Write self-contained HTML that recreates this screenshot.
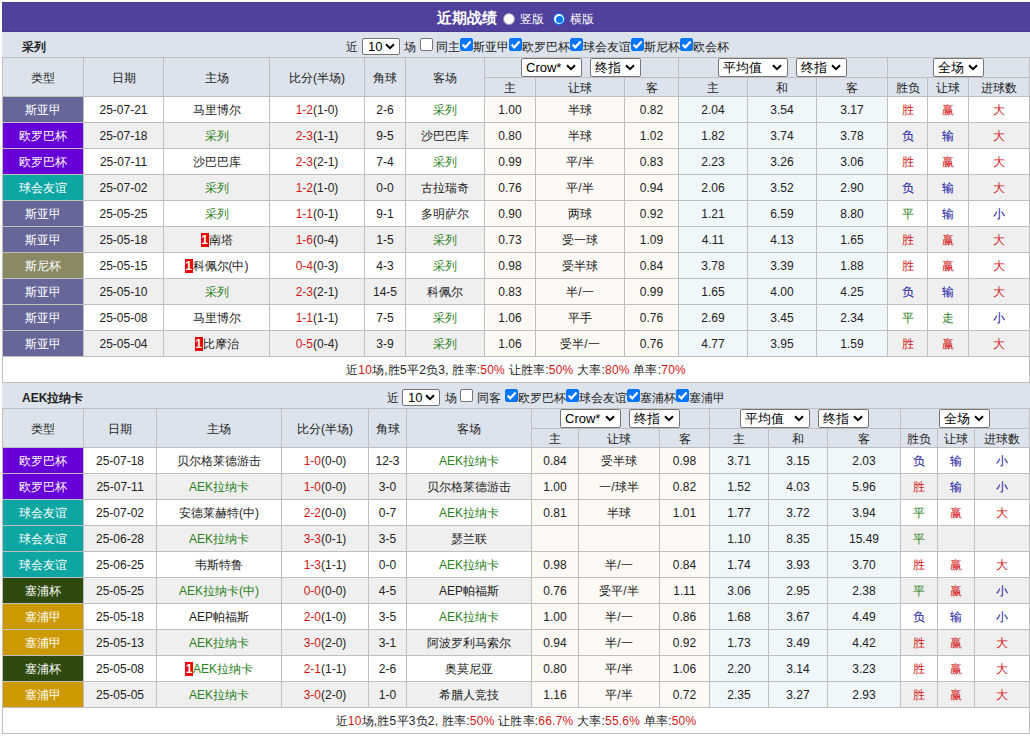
<!DOCTYPE html><html><head><meta charset="utf-8"><style>
html,body{margin:0;padding:0;background:#fff;width:1030px;height:736px;overflow:hidden;position:relative}
body{font-family:"Liberation Sans",sans-serif;font-size:12px;color:#222}
div{position:absolute;box-sizing:border-box;white-space:nowrap}
.t{white-space:nowrap}
.sel{background:#fff;border:1px solid #767676;border-radius:2px;box-sizing:content-box;color:#000;font-size:13px}
.sel span{position:absolute;left:4px;top:0;line-height:17px}
.sel.sm span{line-height:15px;left:5px}
.cb{width:13px;height:13px;border:1px solid #767676;border-radius:2px;background:#fff}
.cb.on{background:#0075ff;border-color:#0075ff}
.cb svg{position:absolute;left:-1px;top:-1px}
.rc{display:inline-block;background:#e00;color:#fff;font-weight:bold;width:8px;line-height:14px;text-align:center;vertical-align:middle;position:relative;top:-1px}
</style></head><body>
<div style="left:2px;top:2px;width:1028px;height:30px;background:#51409c"></div>
<div style="left:2px;top:31px;width:1028px;height:1px;background:#483a8c"></div>
<div style="left:2px;top:2px;width:1028px;height:1px;background:#46398a"></div>
<div style="left:2px;top:32px;width:1028px;height:1px;background:#e6e6f7"></div>
<div class="t" style="left:437px;top:3px;font-size:15px;font-weight:bold;color:#fff;line-height:30px">近期战绩</div>
<div style="left:503px;top:13px;width:12px;height:12px;border-radius:50%;background:#fff;border:1px solid #9a9ab0"></div>
<div class="t" style="left:520px;top:4px;color:#fff;line-height:30px">竖版</div>
<div style="left:553px;top:13px;width:12px;height:12px;border-radius:50%;background:#0075ff"></div>
<div style="left:554px;top:14px;width:10px;height:10px;border-radius:50%;background:#fff"></div>
<div style="left:555.5px;top:15.5px;width:7px;height:7px;border-radius:50%;background:#0075ff"></div>
<div class="t" style="left:570px;top:4px;color:#fff;line-height:30px">横版</div>
<div style="left:2px;top:32px;width:1028px;height:25px;background:#dce3ec"></div>
<div class="t" style="left:22px;top:35px;font-weight:bold;line-height:25px;">采列</div>
<div class="t" style="left:346px;top:35px;line-height:25px">近</div><div class="sel sm" style="left:362px;top:38px;width:36px;height:15px"><span>10</span><svg width="10" height="7" viewBox="0 0 10 7" style="position:absolute;right:4px;top:4px"><path d="M1 1.2 L5 5.2 L9 1.2" fill="none" stroke="#000" stroke-width="2"/></svg></div><div class="t" style="left:404px;top:35px;line-height:25px">场</div><div class="cb" style="left:420px;top:38px"></div><div class="t" style="left:436px;top:35px;line-height:25px">同主</div><div class="cb on" style="left:460px;top:38px"><svg width="13" height="13" viewBox="0 0 13 13"><path d="M2.6 6.6 L5.3 9.3 L10.6 3.4" fill="none" stroke="#fff" stroke-width="2.2"/></svg></div><div class="t" style="left:473px;top:35px;line-height:25px">斯亚甲</div><div class="cb on" style="left:509px;top:38px"><svg width="13" height="13" viewBox="0 0 13 13"><path d="M2.6 6.6 L5.3 9.3 L10.6 3.4" fill="none" stroke="#fff" stroke-width="2.2"/></svg></div><div class="t" style="left:522px;top:35px;line-height:25px">欧罗巴杯</div><div class="cb on" style="left:570px;top:38px"><svg width="13" height="13" viewBox="0 0 13 13"><path d="M2.6 6.6 L5.3 9.3 L10.6 3.4" fill="none" stroke="#fff" stroke-width="2.2"/></svg></div><div class="t" style="left:583px;top:35px;line-height:25px">球会友谊</div><div class="cb on" style="left:631px;top:38px"><svg width="13" height="13" viewBox="0 0 13 13"><path d="M2.6 6.6 L5.3 9.3 L10.6 3.4" fill="none" stroke="#fff" stroke-width="2.2"/></svg></div><div class="t" style="left:644px;top:35px;line-height:25px">斯尼杯</div><div class="cb on" style="left:680px;top:38px"><svg width="13" height="13" viewBox="0 0 13 13"><path d="M2.6 6.6 L5.3 9.3 L10.6 3.4" fill="none" stroke="#fff" stroke-width="2.2"/></svg></div><div class="t" style="left:693px;top:35px;line-height:25px">欧会杯</div>
<div style="left:2px;top:57px;width:1028px;height:326px;background:#bfbfbf"></div>
<div style="left:3px;top:58px;width:80px;height:38px;background:#dce3ec;line-height:38px;text-align:center;padding-top:1px">类型</div>
<div style="left:84px;top:58px;width:79px;height:38px;background:#dce3ec;line-height:38px;text-align:center;padding-top:1px">日期</div>
<div style="left:164px;top:58px;width:105px;height:38px;background:#dce3ec;line-height:38px;text-align:center;padding-top:1px">主场</div>
<div style="left:270px;top:58px;width:94px;height:38px;background:#dce3ec;line-height:38px;text-align:center;padding-top:1px">比分(半场)</div>
<div style="left:365px;top:58px;width:40px;height:38px;background:#dce3ec;line-height:38px;text-align:center;padding-top:1px">角球</div>
<div style="left:406px;top:58px;width:78px;height:38px;background:#dce3ec;line-height:38px;text-align:center;padding-top:1px">客场</div>
<div style="left:485px;top:58px;width:193px;height:19px;background:#dce3ec;"></div>
<div style="left:679px;top:58px;width:208px;height:19px;background:#dce3ec;"></div>
<div style="left:888px;top:58px;width:141px;height:19px;background:#dce3ec;"></div>
<div style="left:485px;top:78px;width:50px;height:18px;background:#dce3ec;line-height:18px;text-align:center;padding-top:1px">主</div>
<div style="left:536px;top:78px;width:88px;height:18px;background:#dce3ec;line-height:18px;text-align:center;padding-top:1px">让球</div>
<div style="left:625px;top:78px;width:53px;height:18px;background:#dce3ec;line-height:18px;text-align:center;padding-top:1px">客</div>
<div style="left:679px;top:78px;width:68px;height:18px;background:#dce3ec;line-height:18px;text-align:center;padding-top:1px">主</div>
<div style="left:748px;top:78px;width:68px;height:18px;background:#dce3ec;line-height:18px;text-align:center;padding-top:1px">和</div>
<div style="left:817px;top:78px;width:70px;height:18px;background:#dce3ec;line-height:18px;text-align:center;padding-top:1px">客</div>
<div style="left:888px;top:78px;width:39px;height:18px;background:#dce3ec;line-height:18px;text-align:center;padding-top:1px">胜负</div>
<div style="left:928px;top:78px;width:40px;height:18px;background:#dce3ec;line-height:18px;text-align:center;padding-top:1px">让球</div>
<div style="left:969px;top:78px;width:60px;height:18px;background:#dce3ec;line-height:18px;text-align:center;padding-top:1px">进球数</div>
<div class="sel" style="left:521px;top:58px;width:59px;height:17px"><span>Crow*</span><svg width="10" height="7" viewBox="0 0 10 7" style="position:absolute;right:5px;top:5px"><path d="M1 1.2 L5 5.2 L9 1.2" fill="none" stroke="#000" stroke-width="2"/></svg></div>
<div class="sel" style="left:590px;top:58px;width:49px;height:17px"><span>终指</span><svg width="10" height="7" viewBox="0 0 10 7" style="position:absolute;right:5px;top:5px"><path d="M1 1.2 L5 5.2 L9 1.2" fill="none" stroke="#000" stroke-width="2"/></svg></div>
<div class="sel" style="left:718px;top:58px;width:68px;height:17px"><span>平均值</span><svg width="10" height="7" viewBox="0 0 10 7" style="position:absolute;right:5px;top:5px"><path d="M1 1.2 L5 5.2 L9 1.2" fill="none" stroke="#000" stroke-width="2"/></svg></div>
<div class="sel" style="left:796px;top:58px;width:49px;height:17px"><span>终指</span><svg width="10" height="7" viewBox="0 0 10 7" style="position:absolute;right:5px;top:5px"><path d="M1 1.2 L5 5.2 L9 1.2" fill="none" stroke="#000" stroke-width="2"/></svg></div>
<div class="sel" style="left:933px;top:58px;width:49px;height:17px"><span>全场</span><svg width="10" height="7" viewBox="0 0 10 7" style="position:absolute;right:5px;top:5px"><path d="M1 1.2 L5 5.2 L9 1.2" fill="none" stroke="#000" stroke-width="2"/></svg></div>
<div style="left:3px;top:97px;width:80px;height:25px;background:#666699;line-height:25px;text-align:center;padding-top:1px;color:#fff">斯亚甲</div>
<div style="left:84px;top:97px;width:79px;height:25px;background:#fff;line-height:25px;text-align:center;padding-top:1px">25-07-21</div>
<div style="left:164px;top:97px;width:105px;height:25px;background:#fff;line-height:25px;text-align:center;padding-top:1px">马里博尔</div>
<div style="left:270px;top:97px;width:94px;height:25px;background:#fff;line-height:25px;text-align:center;padding-top:1px"><span style="color:#d41515">1-2</span>(1-0)</div>
<div style="left:365px;top:97px;width:40px;height:25px;background:#fff;line-height:25px;text-align:center;padding-top:1px">2-6</div>
<div style="left:406px;top:97px;width:78px;height:25px;background:#fff;line-height:25px;text-align:center;padding-top:1px"><span style="color:#2a8020">采列</span></div>
<div style="left:485px;top:97px;width:50px;height:25px;background:#fdf9f5;line-height:25px;text-align:center;padding-top:1px">1.00</div>
<div style="left:536px;top:97px;width:88px;height:25px;background:#fdf9f5;line-height:25px;text-align:center;padding-top:1px">半球</div>
<div style="left:625px;top:97px;width:53px;height:25px;background:#fdf9f5;line-height:25px;text-align:center;padding-top:1px">0.82</div>
<div style="left:679px;top:97px;width:68px;height:25px;background:#f0f7fb;line-height:25px;text-align:center;padding-top:1px">2.04</div>
<div style="left:748px;top:97px;width:68px;height:25px;background:#f0f7fb;line-height:25px;text-align:center;padding-top:1px">3.54</div>
<div style="left:817px;top:97px;width:70px;height:25px;background:#f0f7fb;line-height:25px;text-align:center;padding-top:1px">3.17</div>
<div style="left:888px;top:97px;width:39px;height:25px;background:#fff;line-height:25px;text-align:center;padding-top:1px;color:#d41515">胜</div>
<div style="left:928px;top:97px;width:40px;height:25px;background:#fff;line-height:25px;text-align:center;padding-top:1px;color:#d41515">赢</div>
<div style="left:969px;top:97px;width:60px;height:25px;background:#fff;line-height:25px;text-align:center;padding-top:1px;color:#d41515">大</div>
<div style="left:3px;top:123px;width:80px;height:25px;background:#6600d8;line-height:25px;text-align:center;padding-top:1px;color:#fff">欧罗巴杯</div>
<div style="left:84px;top:123px;width:79px;height:25px;background:#efefef;line-height:25px;text-align:center;padding-top:1px">25-07-18</div>
<div style="left:164px;top:123px;width:105px;height:25px;background:#efefef;line-height:25px;text-align:center;padding-top:1px"><span style="color:#2a8020">采列</span></div>
<div style="left:270px;top:123px;width:94px;height:25px;background:#efefef;line-height:25px;text-align:center;padding-top:1px"><span style="color:#d41515">2-3</span>(1-1)</div>
<div style="left:365px;top:123px;width:40px;height:25px;background:#efefef;line-height:25px;text-align:center;padding-top:1px">9-5</div>
<div style="left:406px;top:123px;width:78px;height:25px;background:#efefef;line-height:25px;text-align:center;padding-top:1px">沙巴巴库</div>
<div style="left:485px;top:123px;width:50px;height:25px;background:#fdf9f5;line-height:25px;text-align:center;padding-top:1px">0.80</div>
<div style="left:536px;top:123px;width:88px;height:25px;background:#fdf9f5;line-height:25px;text-align:center;padding-top:1px">半球</div>
<div style="left:625px;top:123px;width:53px;height:25px;background:#fdf9f5;line-height:25px;text-align:center;padding-top:1px">1.02</div>
<div style="left:679px;top:123px;width:68px;height:25px;background:#f0f7fb;line-height:25px;text-align:center;padding-top:1px">1.82</div>
<div style="left:748px;top:123px;width:68px;height:25px;background:#f0f7fb;line-height:25px;text-align:center;padding-top:1px">3.74</div>
<div style="left:817px;top:123px;width:70px;height:25px;background:#f0f7fb;line-height:25px;text-align:center;padding-top:1px">3.78</div>
<div style="left:888px;top:123px;width:39px;height:25px;background:#efefef;line-height:25px;text-align:center;padding-top:1px;color:#1010a0">负</div>
<div style="left:928px;top:123px;width:40px;height:25px;background:#efefef;line-height:25px;text-align:center;padding-top:1px;color:#1010a0">输</div>
<div style="left:969px;top:123px;width:60px;height:25px;background:#efefef;line-height:25px;text-align:center;padding-top:1px;color:#d41515">大</div>
<div style="left:3px;top:149px;width:80px;height:25px;background:#6600d8;line-height:25px;text-align:center;padding-top:1px;color:#fff">欧罗巴杯</div>
<div style="left:84px;top:149px;width:79px;height:25px;background:#fff;line-height:25px;text-align:center;padding-top:1px">25-07-11</div>
<div style="left:164px;top:149px;width:105px;height:25px;background:#fff;line-height:25px;text-align:center;padding-top:1px">沙巴巴库</div>
<div style="left:270px;top:149px;width:94px;height:25px;background:#fff;line-height:25px;text-align:center;padding-top:1px"><span style="color:#d41515">2-3</span>(2-1)</div>
<div style="left:365px;top:149px;width:40px;height:25px;background:#fff;line-height:25px;text-align:center;padding-top:1px">7-4</div>
<div style="left:406px;top:149px;width:78px;height:25px;background:#fff;line-height:25px;text-align:center;padding-top:1px"><span style="color:#2a8020">采列</span></div>
<div style="left:485px;top:149px;width:50px;height:25px;background:#fdf9f5;line-height:25px;text-align:center;padding-top:1px">0.99</div>
<div style="left:536px;top:149px;width:88px;height:25px;background:#fdf9f5;line-height:25px;text-align:center;padding-top:1px">平/半</div>
<div style="left:625px;top:149px;width:53px;height:25px;background:#fdf9f5;line-height:25px;text-align:center;padding-top:1px">0.83</div>
<div style="left:679px;top:149px;width:68px;height:25px;background:#f0f7fb;line-height:25px;text-align:center;padding-top:1px">2.23</div>
<div style="left:748px;top:149px;width:68px;height:25px;background:#f0f7fb;line-height:25px;text-align:center;padding-top:1px">3.26</div>
<div style="left:817px;top:149px;width:70px;height:25px;background:#f0f7fb;line-height:25px;text-align:center;padding-top:1px">3.06</div>
<div style="left:888px;top:149px;width:39px;height:25px;background:#fff;line-height:25px;text-align:center;padding-top:1px;color:#d41515">胜</div>
<div style="left:928px;top:149px;width:40px;height:25px;background:#fff;line-height:25px;text-align:center;padding-top:1px;color:#d41515">赢</div>
<div style="left:969px;top:149px;width:60px;height:25px;background:#fff;line-height:25px;text-align:center;padding-top:1px;color:#d41515">大</div>
<div style="left:3px;top:175px;width:80px;height:25px;background:#0ea6a2;line-height:25px;text-align:center;padding-top:1px;color:#fff">球会友谊</div>
<div style="left:84px;top:175px;width:79px;height:25px;background:#efefef;line-height:25px;text-align:center;padding-top:1px">25-07-02</div>
<div style="left:164px;top:175px;width:105px;height:25px;background:#efefef;line-height:25px;text-align:center;padding-top:1px"><span style="color:#2a8020">采列</span></div>
<div style="left:270px;top:175px;width:94px;height:25px;background:#efefef;line-height:25px;text-align:center;padding-top:1px"><span style="color:#d41515">1-2</span>(1-0)</div>
<div style="left:365px;top:175px;width:40px;height:25px;background:#efefef;line-height:25px;text-align:center;padding-top:1px">0-0</div>
<div style="left:406px;top:175px;width:78px;height:25px;background:#efefef;line-height:25px;text-align:center;padding-top:1px">古拉瑞奇</div>
<div style="left:485px;top:175px;width:50px;height:25px;background:#fdf9f5;line-height:25px;text-align:center;padding-top:1px">0.76</div>
<div style="left:536px;top:175px;width:88px;height:25px;background:#fdf9f5;line-height:25px;text-align:center;padding-top:1px">平/半</div>
<div style="left:625px;top:175px;width:53px;height:25px;background:#fdf9f5;line-height:25px;text-align:center;padding-top:1px">0.94</div>
<div style="left:679px;top:175px;width:68px;height:25px;background:#f0f7fb;line-height:25px;text-align:center;padding-top:1px">2.06</div>
<div style="left:748px;top:175px;width:68px;height:25px;background:#f0f7fb;line-height:25px;text-align:center;padding-top:1px">3.52</div>
<div style="left:817px;top:175px;width:70px;height:25px;background:#f0f7fb;line-height:25px;text-align:center;padding-top:1px">2.90</div>
<div style="left:888px;top:175px;width:39px;height:25px;background:#efefef;line-height:25px;text-align:center;padding-top:1px;color:#1010a0">负</div>
<div style="left:928px;top:175px;width:40px;height:25px;background:#efefef;line-height:25px;text-align:center;padding-top:1px;color:#1010a0">输</div>
<div style="left:969px;top:175px;width:60px;height:25px;background:#efefef;line-height:25px;text-align:center;padding-top:1px;color:#d41515">大</div>
<div style="left:3px;top:201px;width:80px;height:25px;background:#666699;line-height:25px;text-align:center;padding-top:1px;color:#fff">斯亚甲</div>
<div style="left:84px;top:201px;width:79px;height:25px;background:#fff;line-height:25px;text-align:center;padding-top:1px">25-05-25</div>
<div style="left:164px;top:201px;width:105px;height:25px;background:#fff;line-height:25px;text-align:center;padding-top:1px"><span style="color:#2a8020">采列</span></div>
<div style="left:270px;top:201px;width:94px;height:25px;background:#fff;line-height:25px;text-align:center;padding-top:1px"><span style="color:#d41515">1-1</span>(0-1)</div>
<div style="left:365px;top:201px;width:40px;height:25px;background:#fff;line-height:25px;text-align:center;padding-top:1px">9-1</div>
<div style="left:406px;top:201px;width:78px;height:25px;background:#fff;line-height:25px;text-align:center;padding-top:1px">多明萨尔</div>
<div style="left:485px;top:201px;width:50px;height:25px;background:#fdf9f5;line-height:25px;text-align:center;padding-top:1px">0.90</div>
<div style="left:536px;top:201px;width:88px;height:25px;background:#fdf9f5;line-height:25px;text-align:center;padding-top:1px">两球</div>
<div style="left:625px;top:201px;width:53px;height:25px;background:#fdf9f5;line-height:25px;text-align:center;padding-top:1px">0.92</div>
<div style="left:679px;top:201px;width:68px;height:25px;background:#f0f7fb;line-height:25px;text-align:center;padding-top:1px">1.21</div>
<div style="left:748px;top:201px;width:68px;height:25px;background:#f0f7fb;line-height:25px;text-align:center;padding-top:1px">6.59</div>
<div style="left:817px;top:201px;width:70px;height:25px;background:#f0f7fb;line-height:25px;text-align:center;padding-top:1px">8.80</div>
<div style="left:888px;top:201px;width:39px;height:25px;background:#fff;line-height:25px;text-align:center;padding-top:1px;color:#2a8020">平</div>
<div style="left:928px;top:201px;width:40px;height:25px;background:#fff;line-height:25px;text-align:center;padding-top:1px;color:#1010a0">输</div>
<div style="left:969px;top:201px;width:60px;height:25px;background:#fff;line-height:25px;text-align:center;padding-top:1px;color:#1010a0">小</div>
<div style="left:3px;top:227px;width:80px;height:25px;background:#666699;line-height:25px;text-align:center;padding-top:1px;color:#fff">斯亚甲</div>
<div style="left:84px;top:227px;width:79px;height:25px;background:#efefef;line-height:25px;text-align:center;padding-top:1px">25-05-18</div>
<div style="left:164px;top:227px;width:105px;height:25px;background:#efefef;line-height:25px;text-align:center;padding-top:1px"><b class="rc">1</b>南塔</div>
<div style="left:270px;top:227px;width:94px;height:25px;background:#efefef;line-height:25px;text-align:center;padding-top:1px"><span style="color:#d41515">1-6</span>(0-4)</div>
<div style="left:365px;top:227px;width:40px;height:25px;background:#efefef;line-height:25px;text-align:center;padding-top:1px">1-5</div>
<div style="left:406px;top:227px;width:78px;height:25px;background:#efefef;line-height:25px;text-align:center;padding-top:1px"><span style="color:#2a8020">采列</span></div>
<div style="left:485px;top:227px;width:50px;height:25px;background:#fdf9f5;line-height:25px;text-align:center;padding-top:1px">0.73</div>
<div style="left:536px;top:227px;width:88px;height:25px;background:#fdf9f5;line-height:25px;text-align:center;padding-top:1px">受一球</div>
<div style="left:625px;top:227px;width:53px;height:25px;background:#fdf9f5;line-height:25px;text-align:center;padding-top:1px">1.09</div>
<div style="left:679px;top:227px;width:68px;height:25px;background:#f0f7fb;line-height:25px;text-align:center;padding-top:1px">4.11</div>
<div style="left:748px;top:227px;width:68px;height:25px;background:#f0f7fb;line-height:25px;text-align:center;padding-top:1px">4.13</div>
<div style="left:817px;top:227px;width:70px;height:25px;background:#f0f7fb;line-height:25px;text-align:center;padding-top:1px">1.65</div>
<div style="left:888px;top:227px;width:39px;height:25px;background:#efefef;line-height:25px;text-align:center;padding-top:1px;color:#d41515">胜</div>
<div style="left:928px;top:227px;width:40px;height:25px;background:#efefef;line-height:25px;text-align:center;padding-top:1px;color:#d41515">赢</div>
<div style="left:969px;top:227px;width:60px;height:25px;background:#efefef;line-height:25px;text-align:center;padding-top:1px;color:#d41515">大</div>
<div style="left:3px;top:253px;width:80px;height:25px;background:#8a8964;line-height:25px;text-align:center;padding-top:1px;color:#fff">斯尼杯</div>
<div style="left:84px;top:253px;width:79px;height:25px;background:#fff;line-height:25px;text-align:center;padding-top:1px">25-05-15</div>
<div style="left:164px;top:253px;width:105px;height:25px;background:#fff;line-height:25px;text-align:center;padding-top:1px"><b class="rc">1</b>科佩尔(中)</div>
<div style="left:270px;top:253px;width:94px;height:25px;background:#fff;line-height:25px;text-align:center;padding-top:1px"><span style="color:#d41515">0-4</span>(0-3)</div>
<div style="left:365px;top:253px;width:40px;height:25px;background:#fff;line-height:25px;text-align:center;padding-top:1px">4-3</div>
<div style="left:406px;top:253px;width:78px;height:25px;background:#fff;line-height:25px;text-align:center;padding-top:1px"><span style="color:#2a8020">采列</span></div>
<div style="left:485px;top:253px;width:50px;height:25px;background:#fdf9f5;line-height:25px;text-align:center;padding-top:1px">0.98</div>
<div style="left:536px;top:253px;width:88px;height:25px;background:#fdf9f5;line-height:25px;text-align:center;padding-top:1px">受半球</div>
<div style="left:625px;top:253px;width:53px;height:25px;background:#fdf9f5;line-height:25px;text-align:center;padding-top:1px">0.84</div>
<div style="left:679px;top:253px;width:68px;height:25px;background:#f0f7fb;line-height:25px;text-align:center;padding-top:1px">3.78</div>
<div style="left:748px;top:253px;width:68px;height:25px;background:#f0f7fb;line-height:25px;text-align:center;padding-top:1px">3.39</div>
<div style="left:817px;top:253px;width:70px;height:25px;background:#f0f7fb;line-height:25px;text-align:center;padding-top:1px">1.88</div>
<div style="left:888px;top:253px;width:39px;height:25px;background:#fff;line-height:25px;text-align:center;padding-top:1px;color:#d41515">胜</div>
<div style="left:928px;top:253px;width:40px;height:25px;background:#fff;line-height:25px;text-align:center;padding-top:1px;color:#d41515">赢</div>
<div style="left:969px;top:253px;width:60px;height:25px;background:#fff;line-height:25px;text-align:center;padding-top:1px;color:#d41515">大</div>
<div style="left:3px;top:279px;width:80px;height:25px;background:#666699;line-height:25px;text-align:center;padding-top:1px;color:#fff">斯亚甲</div>
<div style="left:84px;top:279px;width:79px;height:25px;background:#efefef;line-height:25px;text-align:center;padding-top:1px">25-05-10</div>
<div style="left:164px;top:279px;width:105px;height:25px;background:#efefef;line-height:25px;text-align:center;padding-top:1px"><span style="color:#2a8020">采列</span></div>
<div style="left:270px;top:279px;width:94px;height:25px;background:#efefef;line-height:25px;text-align:center;padding-top:1px"><span style="color:#d41515">2-3</span>(2-1)</div>
<div style="left:365px;top:279px;width:40px;height:25px;background:#efefef;line-height:25px;text-align:center;padding-top:1px">14-5</div>
<div style="left:406px;top:279px;width:78px;height:25px;background:#efefef;line-height:25px;text-align:center;padding-top:1px">科佩尔</div>
<div style="left:485px;top:279px;width:50px;height:25px;background:#fdf9f5;line-height:25px;text-align:center;padding-top:1px">0.83</div>
<div style="left:536px;top:279px;width:88px;height:25px;background:#fdf9f5;line-height:25px;text-align:center;padding-top:1px">半/一</div>
<div style="left:625px;top:279px;width:53px;height:25px;background:#fdf9f5;line-height:25px;text-align:center;padding-top:1px">0.99</div>
<div style="left:679px;top:279px;width:68px;height:25px;background:#f0f7fb;line-height:25px;text-align:center;padding-top:1px">1.65</div>
<div style="left:748px;top:279px;width:68px;height:25px;background:#f0f7fb;line-height:25px;text-align:center;padding-top:1px">4.00</div>
<div style="left:817px;top:279px;width:70px;height:25px;background:#f0f7fb;line-height:25px;text-align:center;padding-top:1px">4.25</div>
<div style="left:888px;top:279px;width:39px;height:25px;background:#efefef;line-height:25px;text-align:center;padding-top:1px;color:#1010a0">负</div>
<div style="left:928px;top:279px;width:40px;height:25px;background:#efefef;line-height:25px;text-align:center;padding-top:1px;color:#1010a0">输</div>
<div style="left:969px;top:279px;width:60px;height:25px;background:#efefef;line-height:25px;text-align:center;padding-top:1px;color:#d41515">大</div>
<div style="left:3px;top:305px;width:80px;height:25px;background:#666699;line-height:25px;text-align:center;padding-top:1px;color:#fff">斯亚甲</div>
<div style="left:84px;top:305px;width:79px;height:25px;background:#fff;line-height:25px;text-align:center;padding-top:1px">25-05-08</div>
<div style="left:164px;top:305px;width:105px;height:25px;background:#fff;line-height:25px;text-align:center;padding-top:1px">马里博尔</div>
<div style="left:270px;top:305px;width:94px;height:25px;background:#fff;line-height:25px;text-align:center;padding-top:1px"><span style="color:#d41515">1-1</span>(1-1)</div>
<div style="left:365px;top:305px;width:40px;height:25px;background:#fff;line-height:25px;text-align:center;padding-top:1px">7-5</div>
<div style="left:406px;top:305px;width:78px;height:25px;background:#fff;line-height:25px;text-align:center;padding-top:1px"><span style="color:#2a8020">采列</span></div>
<div style="left:485px;top:305px;width:50px;height:25px;background:#fdf9f5;line-height:25px;text-align:center;padding-top:1px">1.06</div>
<div style="left:536px;top:305px;width:88px;height:25px;background:#fdf9f5;line-height:25px;text-align:center;padding-top:1px">平手</div>
<div style="left:625px;top:305px;width:53px;height:25px;background:#fdf9f5;line-height:25px;text-align:center;padding-top:1px">0.76</div>
<div style="left:679px;top:305px;width:68px;height:25px;background:#f0f7fb;line-height:25px;text-align:center;padding-top:1px">2.69</div>
<div style="left:748px;top:305px;width:68px;height:25px;background:#f0f7fb;line-height:25px;text-align:center;padding-top:1px">3.45</div>
<div style="left:817px;top:305px;width:70px;height:25px;background:#f0f7fb;line-height:25px;text-align:center;padding-top:1px">2.34</div>
<div style="left:888px;top:305px;width:39px;height:25px;background:#fff;line-height:25px;text-align:center;padding-top:1px;color:#2a8020">平</div>
<div style="left:928px;top:305px;width:40px;height:25px;background:#fff;line-height:25px;text-align:center;padding-top:1px;color:#2a8020">走</div>
<div style="left:969px;top:305px;width:60px;height:25px;background:#fff;line-height:25px;text-align:center;padding-top:1px;color:#1010a0">小</div>
<div style="left:3px;top:331px;width:80px;height:25px;background:#666699;line-height:25px;text-align:center;padding-top:1px;color:#fff">斯亚甲</div>
<div style="left:84px;top:331px;width:79px;height:25px;background:#efefef;line-height:25px;text-align:center;padding-top:1px">25-05-04</div>
<div style="left:164px;top:331px;width:105px;height:25px;background:#efefef;line-height:25px;text-align:center;padding-top:1px"><b class="rc">1</b>比摩治</div>
<div style="left:270px;top:331px;width:94px;height:25px;background:#efefef;line-height:25px;text-align:center;padding-top:1px"><span style="color:#d41515">0-5</span>(0-4)</div>
<div style="left:365px;top:331px;width:40px;height:25px;background:#efefef;line-height:25px;text-align:center;padding-top:1px">3-9</div>
<div style="left:406px;top:331px;width:78px;height:25px;background:#efefef;line-height:25px;text-align:center;padding-top:1px"><span style="color:#2a8020">采列</span></div>
<div style="left:485px;top:331px;width:50px;height:25px;background:#fdf9f5;line-height:25px;text-align:center;padding-top:1px">1.06</div>
<div style="left:536px;top:331px;width:88px;height:25px;background:#fdf9f5;line-height:25px;text-align:center;padding-top:1px">受半/一</div>
<div style="left:625px;top:331px;width:53px;height:25px;background:#fdf9f5;line-height:25px;text-align:center;padding-top:1px">0.76</div>
<div style="left:679px;top:331px;width:68px;height:25px;background:#f0f7fb;line-height:25px;text-align:center;padding-top:1px">4.77</div>
<div style="left:748px;top:331px;width:68px;height:25px;background:#f0f7fb;line-height:25px;text-align:center;padding-top:1px">3.95</div>
<div style="left:817px;top:331px;width:70px;height:25px;background:#f0f7fb;line-height:25px;text-align:center;padding-top:1px">1.59</div>
<div style="left:888px;top:331px;width:39px;height:25px;background:#efefef;line-height:25px;text-align:center;padding-top:1px;color:#d41515">胜</div>
<div style="left:928px;top:331px;width:40px;height:25px;background:#efefef;line-height:25px;text-align:center;padding-top:1px;color:#d41515">赢</div>
<div style="left:969px;top:331px;width:60px;height:25px;background:#efefef;line-height:25px;text-align:center;padding-top:1px;color:#d41515">大</div>
<div style="left:3px;top:357px;width:1026px;height:25px;background:#fff;line-height:25px;text-align:center;padding-top:1px;letter-spacing:0.22px">近<span style="color:#d41515">10</span>场,胜5平2负3, 胜率:<span style="color:#d41515">50%</span> 让胜率:<span style="color:#d41515">50%</span> 大率:<span style="color:#d41515">80%</span> 单率:<span style="color:#d41515">70%</span></div>
<div style="left:2px;top:383px;width:1028px;height:25px;background:#dce3ec"></div>
<div class="t" style="left:22px;top:386px;font-weight:bold;line-height:25px;">AEK拉纳卡</div>
<div class="t" style="left:387px;top:386px;line-height:25px">近</div><div class="sel sm" style="left:402px;top:389px;width:36px;height:15px"><span>10</span><svg width="10" height="7" viewBox="0 0 10 7" style="position:absolute;right:4px;top:4px"><path d="M1 1.2 L5 5.2 L9 1.2" fill="none" stroke="#000" stroke-width="2"/></svg></div><div class="t" style="left:445px;top:386px;line-height:25px">场</div><div class="cb" style="left:460px;top:389px"></div><div class="t" style="left:477px;top:386px;line-height:25px">同客</div><div class="cb on" style="left:505px;top:389px"><svg width="13" height="13" viewBox="0 0 13 13"><path d="M2.6 6.6 L5.3 9.3 L10.6 3.4" fill="none" stroke="#fff" stroke-width="2.2"/></svg></div><div class="t" style="left:518px;top:386px;line-height:25px">欧罗巴杯</div><div class="cb on" style="left:566px;top:389px"><svg width="13" height="13" viewBox="0 0 13 13"><path d="M2.6 6.6 L5.3 9.3 L10.6 3.4" fill="none" stroke="#fff" stroke-width="2.2"/></svg></div><div class="t" style="left:579px;top:386px;line-height:25px">球会友谊</div><div class="cb on" style="left:627px;top:389px"><svg width="13" height="13" viewBox="0 0 13 13"><path d="M2.6 6.6 L5.3 9.3 L10.6 3.4" fill="none" stroke="#fff" stroke-width="2.2"/></svg></div><div class="t" style="left:640px;top:386px;line-height:25px">塞浦杯</div><div class="cb on" style="left:676px;top:389px"><svg width="13" height="13" viewBox="0 0 13 13"><path d="M2.6 6.6 L5.3 9.3 L10.6 3.4" fill="none" stroke="#fff" stroke-width="2.2"/></svg></div><div class="t" style="left:689px;top:386px;line-height:25px">塞浦甲</div>
<div style="left:2px;top:408px;width:1028px;height:326px;background:#bfbfbf"></div>
<div style="left:3px;top:409px;width:80px;height:38px;background:#dce3ec;line-height:38px;text-align:center;padding-top:1px">类型</div>
<div style="left:84px;top:409px;width:72px;height:38px;background:#dce3ec;line-height:38px;text-align:center;padding-top:1px">日期</div>
<div style="left:157px;top:409px;width:124px;height:38px;background:#dce3ec;line-height:38px;text-align:center;padding-top:1px">主场</div>
<div style="left:282px;top:409px;width:86px;height:38px;background:#dce3ec;line-height:38px;text-align:center;padding-top:1px">比分(半场)</div>
<div style="left:369px;top:409px;width:37px;height:38px;background:#dce3ec;line-height:38px;text-align:center;padding-top:1px">角球</div>
<div style="left:407px;top:409px;width:124px;height:38px;background:#dce3ec;line-height:38px;text-align:center;padding-top:1px">客场</div>
<div style="left:532px;top:409px;width:177px;height:19px;background:#dce3ec;"></div>
<div style="left:710px;top:409px;width:190px;height:19px;background:#dce3ec;"></div>
<div style="left:901px;top:409px;width:128px;height:19px;background:#dce3ec;"></div>
<div style="left:532px;top:429px;width:46px;height:18px;background:#dce3ec;line-height:18px;text-align:center;padding-top:1px">主</div>
<div style="left:579px;top:429px;width:80px;height:18px;background:#dce3ec;line-height:18px;text-align:center;padding-top:1px">让球</div>
<div style="left:660px;top:429px;width:49px;height:18px;background:#dce3ec;line-height:18px;text-align:center;padding-top:1px">客</div>
<div style="left:710px;top:429px;width:58px;height:18px;background:#dce3ec;line-height:18px;text-align:center;padding-top:1px">主</div>
<div style="left:769px;top:429px;width:58px;height:18px;background:#dce3ec;line-height:18px;text-align:center;padding-top:1px">和</div>
<div style="left:828px;top:429px;width:72px;height:18px;background:#dce3ec;line-height:18px;text-align:center;padding-top:1px">客</div>
<div style="left:901px;top:429px;width:36px;height:18px;background:#dce3ec;line-height:18px;text-align:center;padding-top:1px">胜负</div>
<div style="left:938px;top:429px;width:36px;height:18px;background:#dce3ec;line-height:18px;text-align:center;padding-top:1px">让球</div>
<div style="left:975px;top:429px;width:54px;height:18px;background:#dce3ec;line-height:18px;text-align:center;padding-top:1px">进球数</div>
<div class="sel" style="left:560px;top:409px;width:59px;height:17px"><span>Crow*</span><svg width="10" height="7" viewBox="0 0 10 7" style="position:absolute;right:5px;top:5px"><path d="M1 1.2 L5 5.2 L9 1.2" fill="none" stroke="#000" stroke-width="2"/></svg></div>
<div class="sel" style="left:629px;top:409px;width:49px;height:17px"><span>终指</span><svg width="10" height="7" viewBox="0 0 10 7" style="position:absolute;right:5px;top:5px"><path d="M1 1.2 L5 5.2 L9 1.2" fill="none" stroke="#000" stroke-width="2"/></svg></div>
<div class="sel" style="left:740px;top:409px;width:68px;height:17px"><span>平均值</span><svg width="10" height="7" viewBox="0 0 10 7" style="position:absolute;right:5px;top:5px"><path d="M1 1.2 L5 5.2 L9 1.2" fill="none" stroke="#000" stroke-width="2"/></svg></div>
<div class="sel" style="left:818px;top:409px;width:49px;height:17px"><span>终指</span><svg width="10" height="7" viewBox="0 0 10 7" style="position:absolute;right:5px;top:5px"><path d="M1 1.2 L5 5.2 L9 1.2" fill="none" stroke="#000" stroke-width="2"/></svg></div>
<div class="sel" style="left:939px;top:409px;width:49px;height:17px"><span>全场</span><svg width="10" height="7" viewBox="0 0 10 7" style="position:absolute;right:5px;top:5px"><path d="M1 1.2 L5 5.2 L9 1.2" fill="none" stroke="#000" stroke-width="2"/></svg></div>
<div style="left:3px;top:448px;width:80px;height:25px;background:#6600d8;line-height:25px;text-align:center;padding-top:1px;color:#fff">欧罗巴杯</div>
<div style="left:84px;top:448px;width:72px;height:25px;background:#fff;line-height:25px;text-align:center;padding-top:1px">25-07-18</div>
<div style="left:157px;top:448px;width:124px;height:25px;background:#fff;line-height:25px;text-align:center;padding-top:1px">贝尔格莱德游击</div>
<div style="left:282px;top:448px;width:86px;height:25px;background:#fff;line-height:25px;text-align:center;padding-top:1px"><span style="color:#d41515">1-0</span>(0-0)</div>
<div style="left:369px;top:448px;width:37px;height:25px;background:#fff;line-height:25px;text-align:center;padding-top:1px">12-3</div>
<div style="left:407px;top:448px;width:124px;height:25px;background:#fff;line-height:25px;text-align:center;padding-top:1px"><span style="color:#2a8020">AEK拉纳卡</span></div>
<div style="left:532px;top:448px;width:46px;height:25px;background:#fdf9f5;line-height:25px;text-align:center;padding-top:1px">0.84</div>
<div style="left:579px;top:448px;width:80px;height:25px;background:#fdf9f5;line-height:25px;text-align:center;padding-top:1px">受半球</div>
<div style="left:660px;top:448px;width:49px;height:25px;background:#fdf9f5;line-height:25px;text-align:center;padding-top:1px">0.98</div>
<div style="left:710px;top:448px;width:58px;height:25px;background:#f0f7fb;line-height:25px;text-align:center;padding-top:1px">3.71</div>
<div style="left:769px;top:448px;width:58px;height:25px;background:#f0f7fb;line-height:25px;text-align:center;padding-top:1px">3.15</div>
<div style="left:828px;top:448px;width:72px;height:25px;background:#f0f7fb;line-height:25px;text-align:center;padding-top:1px">2.03</div>
<div style="left:901px;top:448px;width:36px;height:25px;background:#fff;line-height:25px;text-align:center;padding-top:1px;color:#1010a0">负</div>
<div style="left:938px;top:448px;width:36px;height:25px;background:#fff;line-height:25px;text-align:center;padding-top:1px;color:#1010a0">输</div>
<div style="left:975px;top:448px;width:54px;height:25px;background:#fff;line-height:25px;text-align:center;padding-top:1px;color:#1010a0">小</div>
<div style="left:3px;top:474px;width:80px;height:25px;background:#6600d8;line-height:25px;text-align:center;padding-top:1px;color:#fff">欧罗巴杯</div>
<div style="left:84px;top:474px;width:72px;height:25px;background:#efefef;line-height:25px;text-align:center;padding-top:1px">25-07-11</div>
<div style="left:157px;top:474px;width:124px;height:25px;background:#efefef;line-height:25px;text-align:center;padding-top:1px"><span style="color:#2a8020">AEK拉纳卡</span></div>
<div style="left:282px;top:474px;width:86px;height:25px;background:#efefef;line-height:25px;text-align:center;padding-top:1px"><span style="color:#d41515">1-0</span>(0-0)</div>
<div style="left:369px;top:474px;width:37px;height:25px;background:#efefef;line-height:25px;text-align:center;padding-top:1px">3-0</div>
<div style="left:407px;top:474px;width:124px;height:25px;background:#efefef;line-height:25px;text-align:center;padding-top:1px">贝尔格莱德游击</div>
<div style="left:532px;top:474px;width:46px;height:25px;background:#fdf9f5;line-height:25px;text-align:center;padding-top:1px">1.00</div>
<div style="left:579px;top:474px;width:80px;height:25px;background:#fdf9f5;line-height:25px;text-align:center;padding-top:1px">一/球半</div>
<div style="left:660px;top:474px;width:49px;height:25px;background:#fdf9f5;line-height:25px;text-align:center;padding-top:1px">0.82</div>
<div style="left:710px;top:474px;width:58px;height:25px;background:#f0f7fb;line-height:25px;text-align:center;padding-top:1px">1.52</div>
<div style="left:769px;top:474px;width:58px;height:25px;background:#f0f7fb;line-height:25px;text-align:center;padding-top:1px">4.03</div>
<div style="left:828px;top:474px;width:72px;height:25px;background:#f0f7fb;line-height:25px;text-align:center;padding-top:1px">5.96</div>
<div style="left:901px;top:474px;width:36px;height:25px;background:#efefef;line-height:25px;text-align:center;padding-top:1px;color:#d41515">胜</div>
<div style="left:938px;top:474px;width:36px;height:25px;background:#efefef;line-height:25px;text-align:center;padding-top:1px;color:#1010a0">输</div>
<div style="left:975px;top:474px;width:54px;height:25px;background:#efefef;line-height:25px;text-align:center;padding-top:1px;color:#1010a0">小</div>
<div style="left:3px;top:500px;width:80px;height:25px;background:#0ea6a2;line-height:25px;text-align:center;padding-top:1px;color:#fff">球会友谊</div>
<div style="left:84px;top:500px;width:72px;height:25px;background:#fff;line-height:25px;text-align:center;padding-top:1px">25-07-02</div>
<div style="left:157px;top:500px;width:124px;height:25px;background:#fff;line-height:25px;text-align:center;padding-top:1px">安德莱赫特(中)</div>
<div style="left:282px;top:500px;width:86px;height:25px;background:#fff;line-height:25px;text-align:center;padding-top:1px"><span style="color:#d41515">2-2</span>(0-0)</div>
<div style="left:369px;top:500px;width:37px;height:25px;background:#fff;line-height:25px;text-align:center;padding-top:1px">0-7</div>
<div style="left:407px;top:500px;width:124px;height:25px;background:#fff;line-height:25px;text-align:center;padding-top:1px"><span style="color:#2a8020">AEK拉纳卡</span></div>
<div style="left:532px;top:500px;width:46px;height:25px;background:#fdf9f5;line-height:25px;text-align:center;padding-top:1px">0.81</div>
<div style="left:579px;top:500px;width:80px;height:25px;background:#fdf9f5;line-height:25px;text-align:center;padding-top:1px">半球</div>
<div style="left:660px;top:500px;width:49px;height:25px;background:#fdf9f5;line-height:25px;text-align:center;padding-top:1px">1.01</div>
<div style="left:710px;top:500px;width:58px;height:25px;background:#f0f7fb;line-height:25px;text-align:center;padding-top:1px">1.77</div>
<div style="left:769px;top:500px;width:58px;height:25px;background:#f0f7fb;line-height:25px;text-align:center;padding-top:1px">3.72</div>
<div style="left:828px;top:500px;width:72px;height:25px;background:#f0f7fb;line-height:25px;text-align:center;padding-top:1px">3.94</div>
<div style="left:901px;top:500px;width:36px;height:25px;background:#fff;line-height:25px;text-align:center;padding-top:1px;color:#2a8020">平</div>
<div style="left:938px;top:500px;width:36px;height:25px;background:#fff;line-height:25px;text-align:center;padding-top:1px;color:#d41515">赢</div>
<div style="left:975px;top:500px;width:54px;height:25px;background:#fff;line-height:25px;text-align:center;padding-top:1px;color:#d41515">大</div>
<div style="left:3px;top:526px;width:80px;height:25px;background:#0ea6a2;line-height:25px;text-align:center;padding-top:1px;color:#fff">球会友谊</div>
<div style="left:84px;top:526px;width:72px;height:25px;background:#efefef;line-height:25px;text-align:center;padding-top:1px">25-06-28</div>
<div style="left:157px;top:526px;width:124px;height:25px;background:#efefef;line-height:25px;text-align:center;padding-top:1px"><span style="color:#2a8020">AEK拉纳卡</span></div>
<div style="left:282px;top:526px;width:86px;height:25px;background:#efefef;line-height:25px;text-align:center;padding-top:1px"><span style="color:#d41515">3-3</span>(0-1)</div>
<div style="left:369px;top:526px;width:37px;height:25px;background:#efefef;line-height:25px;text-align:center;padding-top:1px">3-5</div>
<div style="left:407px;top:526px;width:124px;height:25px;background:#efefef;line-height:25px;text-align:center;padding-top:1px">瑟兰联</div>
<div style="left:532px;top:526px;width:46px;height:25px;background:#fdf9f5;line-height:25px;text-align:center;padding-top:1px"></div>
<div style="left:579px;top:526px;width:80px;height:25px;background:#fdf9f5;line-height:25px;text-align:center;padding-top:1px"></div>
<div style="left:660px;top:526px;width:49px;height:25px;background:#fdf9f5;line-height:25px;text-align:center;padding-top:1px"></div>
<div style="left:710px;top:526px;width:58px;height:25px;background:#f0f7fb;line-height:25px;text-align:center;padding-top:1px">1.10</div>
<div style="left:769px;top:526px;width:58px;height:25px;background:#f0f7fb;line-height:25px;text-align:center;padding-top:1px">8.35</div>
<div style="left:828px;top:526px;width:72px;height:25px;background:#f0f7fb;line-height:25px;text-align:center;padding-top:1px">15.49</div>
<div style="left:901px;top:526px;width:36px;height:25px;background:#efefef;line-height:25px;text-align:center;padding-top:1px;color:#2a8020">平</div>
<div style="left:938px;top:526px;width:36px;height:25px;background:#efefef;line-height:25px;text-align:center;padding-top:1px;color:#222"></div>
<div style="left:975px;top:526px;width:54px;height:25px;background:#efefef;line-height:25px;text-align:center;padding-top:1px;color:#222"></div>
<div style="left:3px;top:552px;width:80px;height:25px;background:#0ea6a2;line-height:25px;text-align:center;padding-top:1px;color:#fff">球会友谊</div>
<div style="left:84px;top:552px;width:72px;height:25px;background:#fff;line-height:25px;text-align:center;padding-top:1px">25-06-25</div>
<div style="left:157px;top:552px;width:124px;height:25px;background:#fff;line-height:25px;text-align:center;padding-top:1px">韦斯特鲁</div>
<div style="left:282px;top:552px;width:86px;height:25px;background:#fff;line-height:25px;text-align:center;padding-top:1px"><span style="color:#d41515">1-3</span>(1-1)</div>
<div style="left:369px;top:552px;width:37px;height:25px;background:#fff;line-height:25px;text-align:center;padding-top:1px">0-0</div>
<div style="left:407px;top:552px;width:124px;height:25px;background:#fff;line-height:25px;text-align:center;padding-top:1px"><span style="color:#2a8020">AEK拉纳卡</span></div>
<div style="left:532px;top:552px;width:46px;height:25px;background:#fdf9f5;line-height:25px;text-align:center;padding-top:1px">0.98</div>
<div style="left:579px;top:552px;width:80px;height:25px;background:#fdf9f5;line-height:25px;text-align:center;padding-top:1px">半/一</div>
<div style="left:660px;top:552px;width:49px;height:25px;background:#fdf9f5;line-height:25px;text-align:center;padding-top:1px">0.84</div>
<div style="left:710px;top:552px;width:58px;height:25px;background:#f0f7fb;line-height:25px;text-align:center;padding-top:1px">1.74</div>
<div style="left:769px;top:552px;width:58px;height:25px;background:#f0f7fb;line-height:25px;text-align:center;padding-top:1px">3.93</div>
<div style="left:828px;top:552px;width:72px;height:25px;background:#f0f7fb;line-height:25px;text-align:center;padding-top:1px">3.70</div>
<div style="left:901px;top:552px;width:36px;height:25px;background:#fff;line-height:25px;text-align:center;padding-top:1px;color:#d41515">胜</div>
<div style="left:938px;top:552px;width:36px;height:25px;background:#fff;line-height:25px;text-align:center;padding-top:1px;color:#d41515">赢</div>
<div style="left:975px;top:552px;width:54px;height:25px;background:#fff;line-height:25px;text-align:center;padding-top:1px;color:#d41515">大</div>
<div style="left:3px;top:578px;width:80px;height:25px;background:#2e4a0e;line-height:25px;text-align:center;padding-top:1px;color:#fff">塞浦杯</div>
<div style="left:84px;top:578px;width:72px;height:25px;background:#efefef;line-height:25px;text-align:center;padding-top:1px">25-05-25</div>
<div style="left:157px;top:578px;width:124px;height:25px;background:#efefef;line-height:25px;text-align:center;padding-top:1px"><span style="color:#2a8020">AEK拉纳卡(中)</span></div>
<div style="left:282px;top:578px;width:86px;height:25px;background:#efefef;line-height:25px;text-align:center;padding-top:1px"><span style="color:#d41515">0-0</span>(0-0)</div>
<div style="left:369px;top:578px;width:37px;height:25px;background:#efefef;line-height:25px;text-align:center;padding-top:1px">4-5</div>
<div style="left:407px;top:578px;width:124px;height:25px;background:#efefef;line-height:25px;text-align:center;padding-top:1px">AEP帕福斯</div>
<div style="left:532px;top:578px;width:46px;height:25px;background:#fdf9f5;line-height:25px;text-align:center;padding-top:1px">0.76</div>
<div style="left:579px;top:578px;width:80px;height:25px;background:#fdf9f5;line-height:25px;text-align:center;padding-top:1px">受平/半</div>
<div style="left:660px;top:578px;width:49px;height:25px;background:#fdf9f5;line-height:25px;text-align:center;padding-top:1px">1.11</div>
<div style="left:710px;top:578px;width:58px;height:25px;background:#f0f7fb;line-height:25px;text-align:center;padding-top:1px">3.06</div>
<div style="left:769px;top:578px;width:58px;height:25px;background:#f0f7fb;line-height:25px;text-align:center;padding-top:1px">2.95</div>
<div style="left:828px;top:578px;width:72px;height:25px;background:#f0f7fb;line-height:25px;text-align:center;padding-top:1px">2.38</div>
<div style="left:901px;top:578px;width:36px;height:25px;background:#efefef;line-height:25px;text-align:center;padding-top:1px;color:#2a8020">平</div>
<div style="left:938px;top:578px;width:36px;height:25px;background:#efefef;line-height:25px;text-align:center;padding-top:1px;color:#d41515">赢</div>
<div style="left:975px;top:578px;width:54px;height:25px;background:#efefef;line-height:25px;text-align:center;padding-top:1px;color:#1010a0">小</div>
<div style="left:3px;top:604px;width:80px;height:25px;background:#cc9900;line-height:25px;text-align:center;padding-top:1px;color:#fff">塞浦甲</div>
<div style="left:84px;top:604px;width:72px;height:25px;background:#fff;line-height:25px;text-align:center;padding-top:1px">25-05-18</div>
<div style="left:157px;top:604px;width:124px;height:25px;background:#fff;line-height:25px;text-align:center;padding-top:1px">AEP帕福斯</div>
<div style="left:282px;top:604px;width:86px;height:25px;background:#fff;line-height:25px;text-align:center;padding-top:1px"><span style="color:#d41515">2-0</span>(1-0)</div>
<div style="left:369px;top:604px;width:37px;height:25px;background:#fff;line-height:25px;text-align:center;padding-top:1px">3-5</div>
<div style="left:407px;top:604px;width:124px;height:25px;background:#fff;line-height:25px;text-align:center;padding-top:1px"><span style="color:#2a8020">AEK拉纳卡</span></div>
<div style="left:532px;top:604px;width:46px;height:25px;background:#fdf9f5;line-height:25px;text-align:center;padding-top:1px">1.00</div>
<div style="left:579px;top:604px;width:80px;height:25px;background:#fdf9f5;line-height:25px;text-align:center;padding-top:1px">半/一</div>
<div style="left:660px;top:604px;width:49px;height:25px;background:#fdf9f5;line-height:25px;text-align:center;padding-top:1px">0.86</div>
<div style="left:710px;top:604px;width:58px;height:25px;background:#f0f7fb;line-height:25px;text-align:center;padding-top:1px">1.68</div>
<div style="left:769px;top:604px;width:58px;height:25px;background:#f0f7fb;line-height:25px;text-align:center;padding-top:1px">3.67</div>
<div style="left:828px;top:604px;width:72px;height:25px;background:#f0f7fb;line-height:25px;text-align:center;padding-top:1px">4.49</div>
<div style="left:901px;top:604px;width:36px;height:25px;background:#fff;line-height:25px;text-align:center;padding-top:1px;color:#1010a0">负</div>
<div style="left:938px;top:604px;width:36px;height:25px;background:#fff;line-height:25px;text-align:center;padding-top:1px;color:#1010a0">输</div>
<div style="left:975px;top:604px;width:54px;height:25px;background:#fff;line-height:25px;text-align:center;padding-top:1px;color:#1010a0">小</div>
<div style="left:3px;top:630px;width:80px;height:25px;background:#cc9900;line-height:25px;text-align:center;padding-top:1px;color:#fff">塞浦甲</div>
<div style="left:84px;top:630px;width:72px;height:25px;background:#efefef;line-height:25px;text-align:center;padding-top:1px">25-05-13</div>
<div style="left:157px;top:630px;width:124px;height:25px;background:#efefef;line-height:25px;text-align:center;padding-top:1px"><span style="color:#2a8020">AEK拉纳卡</span></div>
<div style="left:282px;top:630px;width:86px;height:25px;background:#efefef;line-height:25px;text-align:center;padding-top:1px"><span style="color:#d41515">3-0</span>(2-0)</div>
<div style="left:369px;top:630px;width:37px;height:25px;background:#efefef;line-height:25px;text-align:center;padding-top:1px">3-1</div>
<div style="left:407px;top:630px;width:124px;height:25px;background:#efefef;line-height:25px;text-align:center;padding-top:1px">阿波罗利马索尔</div>
<div style="left:532px;top:630px;width:46px;height:25px;background:#fdf9f5;line-height:25px;text-align:center;padding-top:1px">0.94</div>
<div style="left:579px;top:630px;width:80px;height:25px;background:#fdf9f5;line-height:25px;text-align:center;padding-top:1px">半/一</div>
<div style="left:660px;top:630px;width:49px;height:25px;background:#fdf9f5;line-height:25px;text-align:center;padding-top:1px">0.92</div>
<div style="left:710px;top:630px;width:58px;height:25px;background:#f0f7fb;line-height:25px;text-align:center;padding-top:1px">1.73</div>
<div style="left:769px;top:630px;width:58px;height:25px;background:#f0f7fb;line-height:25px;text-align:center;padding-top:1px">3.49</div>
<div style="left:828px;top:630px;width:72px;height:25px;background:#f0f7fb;line-height:25px;text-align:center;padding-top:1px">4.42</div>
<div style="left:901px;top:630px;width:36px;height:25px;background:#efefef;line-height:25px;text-align:center;padding-top:1px;color:#d41515">胜</div>
<div style="left:938px;top:630px;width:36px;height:25px;background:#efefef;line-height:25px;text-align:center;padding-top:1px;color:#d41515">赢</div>
<div style="left:975px;top:630px;width:54px;height:25px;background:#efefef;line-height:25px;text-align:center;padding-top:1px;color:#d41515">大</div>
<div style="left:3px;top:656px;width:80px;height:25px;background:#2e4a0e;line-height:25px;text-align:center;padding-top:1px;color:#fff">塞浦杯</div>
<div style="left:84px;top:656px;width:72px;height:25px;background:#fff;line-height:25px;text-align:center;padding-top:1px">25-05-08</div>
<div style="left:157px;top:656px;width:124px;height:25px;background:#fff;line-height:25px;text-align:center;padding-top:1px"><b class="rc">1</b><span style="color:#2a8020">AEK拉纳卡</span></div>
<div style="left:282px;top:656px;width:86px;height:25px;background:#fff;line-height:25px;text-align:center;padding-top:1px"><span style="color:#d41515">2-1</span>(1-1)</div>
<div style="left:369px;top:656px;width:37px;height:25px;background:#fff;line-height:25px;text-align:center;padding-top:1px">2-6</div>
<div style="left:407px;top:656px;width:124px;height:25px;background:#fff;line-height:25px;text-align:center;padding-top:1px">奥莫尼亚</div>
<div style="left:532px;top:656px;width:46px;height:25px;background:#fdf9f5;line-height:25px;text-align:center;padding-top:1px">0.80</div>
<div style="left:579px;top:656px;width:80px;height:25px;background:#fdf9f5;line-height:25px;text-align:center;padding-top:1px">平/半</div>
<div style="left:660px;top:656px;width:49px;height:25px;background:#fdf9f5;line-height:25px;text-align:center;padding-top:1px">1.06</div>
<div style="left:710px;top:656px;width:58px;height:25px;background:#f0f7fb;line-height:25px;text-align:center;padding-top:1px">2.20</div>
<div style="left:769px;top:656px;width:58px;height:25px;background:#f0f7fb;line-height:25px;text-align:center;padding-top:1px">3.14</div>
<div style="left:828px;top:656px;width:72px;height:25px;background:#f0f7fb;line-height:25px;text-align:center;padding-top:1px">3.23</div>
<div style="left:901px;top:656px;width:36px;height:25px;background:#fff;line-height:25px;text-align:center;padding-top:1px;color:#d41515">胜</div>
<div style="left:938px;top:656px;width:36px;height:25px;background:#fff;line-height:25px;text-align:center;padding-top:1px;color:#d41515">赢</div>
<div style="left:975px;top:656px;width:54px;height:25px;background:#fff;line-height:25px;text-align:center;padding-top:1px;color:#d41515">大</div>
<div style="left:3px;top:682px;width:80px;height:25px;background:#cc9900;line-height:25px;text-align:center;padding-top:1px;color:#fff">塞浦甲</div>
<div style="left:84px;top:682px;width:72px;height:25px;background:#efefef;line-height:25px;text-align:center;padding-top:1px">25-05-05</div>
<div style="left:157px;top:682px;width:124px;height:25px;background:#efefef;line-height:25px;text-align:center;padding-top:1px"><span style="color:#2a8020">AEK拉纳卡</span></div>
<div style="left:282px;top:682px;width:86px;height:25px;background:#efefef;line-height:25px;text-align:center;padding-top:1px"><span style="color:#d41515">3-0</span>(2-0)</div>
<div style="left:369px;top:682px;width:37px;height:25px;background:#efefef;line-height:25px;text-align:center;padding-top:1px">1-0</div>
<div style="left:407px;top:682px;width:124px;height:25px;background:#efefef;line-height:25px;text-align:center;padding-top:1px">希腊人竞技</div>
<div style="left:532px;top:682px;width:46px;height:25px;background:#fdf9f5;line-height:25px;text-align:center;padding-top:1px">1.16</div>
<div style="left:579px;top:682px;width:80px;height:25px;background:#fdf9f5;line-height:25px;text-align:center;padding-top:1px">平/半</div>
<div style="left:660px;top:682px;width:49px;height:25px;background:#fdf9f5;line-height:25px;text-align:center;padding-top:1px">0.72</div>
<div style="left:710px;top:682px;width:58px;height:25px;background:#f0f7fb;line-height:25px;text-align:center;padding-top:1px">2.35</div>
<div style="left:769px;top:682px;width:58px;height:25px;background:#f0f7fb;line-height:25px;text-align:center;padding-top:1px">3.27</div>
<div style="left:828px;top:682px;width:72px;height:25px;background:#f0f7fb;line-height:25px;text-align:center;padding-top:1px">2.93</div>
<div style="left:901px;top:682px;width:36px;height:25px;background:#efefef;line-height:25px;text-align:center;padding-top:1px;color:#d41515">胜</div>
<div style="left:938px;top:682px;width:36px;height:25px;background:#efefef;line-height:25px;text-align:center;padding-top:1px;color:#d41515">赢</div>
<div style="left:975px;top:682px;width:54px;height:25px;background:#efefef;line-height:25px;text-align:center;padding-top:1px;color:#d41515">大</div>
<div style="left:3px;top:708px;width:1026px;height:25px;background:#fff;line-height:25px;text-align:center;padding-top:1px;letter-spacing:0.22px">近<span style="color:#d41515">10</span>场,胜5平3负2, 胜率:<span style="color:#d41515">50%</span> 让胜率:<span style="color:#d41515">66.7%</span> 大率:<span style="color:#d41515">55.6%</span> 单率:<span style="color:#d41515">50%</span></div>
</body></html>
